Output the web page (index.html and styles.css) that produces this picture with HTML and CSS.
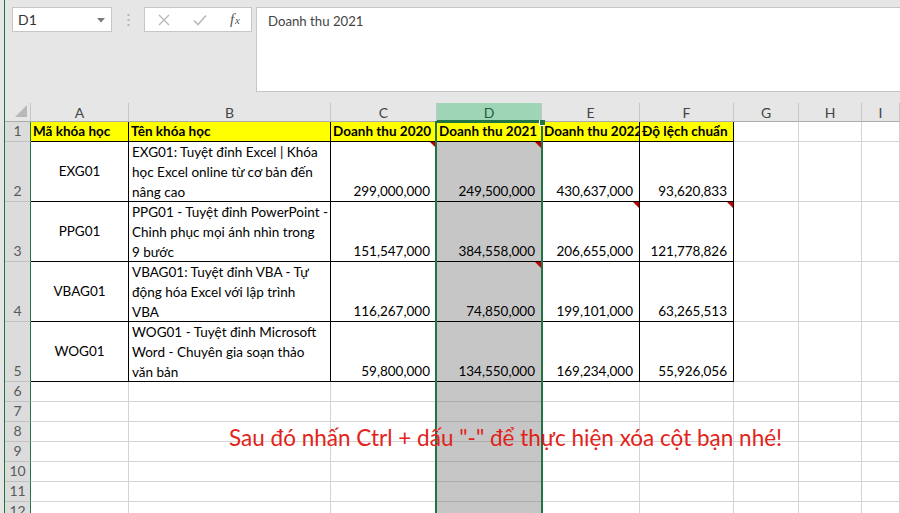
FILE: index.html
```html
<!DOCTYPE html>
<html lang="vi">
<head>
<meta charset="utf-8">
<title>Excel - xóa cột</title>
<link rel="stylesheet" href="styles.css">
</head>
<body>
<div class="window">
  <div class="edge"></div>
  <div class="main">
    <div class="fbar">
      <div class="namebox">
        <span class="nb-text">D1</span>
        <svg class="nb-arrow" width="8" height="5" viewBox="0 0 8 5"><path d="M0 0h8L4 4.5z" fill="#7a7a7a"/></svg>
      </div>
      <div class="grip">
        <svg width="3" height="12" viewBox="0 0 3 12"><rect x="0.5" y="0" width="2" height="2" fill="#b4b4b4"/><rect x="0.5" y="5" width="2" height="2" fill="#b4b4b4"/><rect x="0.5" y="10" width="2" height="2" fill="#b4b4b4"/></svg>
      </div>
      <div class="fbtns">
        <svg class="ico" width="12" height="12" viewBox="0 0 12 12"><path d="M1 1l10 10M11 1L1 11" stroke="#b9b9b9" stroke-width="1.4" fill="none"/></svg>
        <svg class="ico" width="14" height="12" viewBox="0 0 14 12"><path d="M1 6.5l4 4L13 1.5" stroke="#b9b9b9" stroke-width="1.6" fill="none"/></svg>
        <span class="fx">f<span class="fx-x">x</span></span>
      </div>
      <div class="finput">Doanh thu 2021</div>
    </div>

    <div class="sheet">
      <!-- column headers -->
      <div class="corner"><svg width="12" height="12" viewBox="0 0 12 12"><path d="M12 0V12H0z" fill="#b8b8b8"/></svg></div>
      <div class="ch">A</div>
      <div class="ch">B</div>
      <div class="ch">C</div>
      <div class="ch ch-sel">D</div>
      <div class="ch">E</div>
      <div class="ch">F</div>
      <div class="ch">G</div>
      <div class="ch">H</div>
      <div class="ch">I</div>

      <!-- row 1 -->
      <div class="rh">1</div>
      <div class="c t y b">Mã khóa học</div>
      <div class="c t y b">Tên khóa học</div>
      <div class="c t y b">Doanh thu 2020</div>
      <div class="c t y b">Doanh thu 2021</div>
      <div class="c t y b">Doanh thu 2022</div>
      <div class="c t y b">Độ lệch chuẩn</div>
      <div class="c"></div><div class="c"></div><div class="c"></div>

      <!-- row 2 -->
      <div class="rh">2</div>
      <div class="c t ctr">EXG01</div>
      <div class="c t wrap"><span>EXG01: Tuyệt đỉnh Excel | Khóa</span><span>học Excel online từ cơ bản đến</span><span>nâng cao</span></div>
      <div class="c t num cm">299,000,000</div>
      <div class="c t num sel cm">249,500,000</div>
      <div class="c t num">430,637,000</div>
      <div class="c t num">93,620,833</div>
      <div class="c"></div><div class="c"></div><div class="c"></div>

      <!-- row 3 -->
      <div class="rh">3</div>
      <div class="c t ctr">PPG01</div>
      <div class="c t wrap"><span>PPG01 - Tuyệt đỉnh PowerPoint -</span><span>Chinh phục mọi ánh nhìn trong</span><span>9 bước</span></div>
      <div class="c t num">151,547,000</div>
      <div class="c t num sel">384,558,000</div>
      <div class="c t num cm">206,655,000</div>
      <div class="c t num cm">121,778,826</div>
      <div class="c"></div><div class="c"></div><div class="c"></div>

      <!-- row 4 -->
      <div class="rh">4</div>
      <div class="c t ctr">VBAG01</div>
      <div class="c t wrap"><span>VBAG01: Tuyệt đỉnh VBA - Tự</span><span>động hóa Excel với lập trình</span><span>VBA</span></div>
      <div class="c t num">116,267,000</div>
      <div class="c t num sel cm">74,850,000</div>
      <div class="c t num">199,101,000</div>
      <div class="c t num">63,265,513</div>
      <div class="c"></div><div class="c"></div><div class="c"></div>

      <!-- row 5 -->
      <div class="rh">5</div>
      <div class="c t ctr">WOG01</div>
      <div class="c t wrap"><span>WOG01 - Tuyệt đỉnh Microsoft</span><span>Word - Chuyên gia soạn thảo</span><span>văn bản</span></div>
      <div class="c t num">59,800,000</div>
      <div class="c t num sel">134,550,000</div>
      <div class="c t num">169,234,000</div>
      <div class="c t num">55,926,056</div>
      <div class="c"></div><div class="c"></div><div class="c"></div>

      <!-- rows 6-12 -->
      <div class="rh">6</div><div class="c"></div><div class="c"></div><div class="c"></div><div class="c sel"></div><div class="c"></div><div class="c"></div><div class="c"></div><div class="c"></div><div class="c"></div>
      <div class="rh">7</div><div class="c"></div><div class="c"></div><div class="c"></div><div class="c sel"></div><div class="c"></div><div class="c"></div><div class="c"></div><div class="c"></div><div class="c"></div>
      <div class="rh">8</div><div class="c"></div><div class="c"></div><div class="c"></div><div class="c sel"></div><div class="c"></div><div class="c"></div><div class="c"></div><div class="c"></div><div class="c"></div>
      <div class="rh">9</div><div class="c"></div><div class="c"></div><div class="c"></div><div class="c sel"></div><div class="c"></div><div class="c"></div><div class="c"></div><div class="c"></div><div class="c"></div>
      <div class="rh">10</div><div class="c"></div><div class="c"></div><div class="c"></div><div class="c sel"></div><div class="c"></div><div class="c"></div><div class="c"></div><div class="c"></div><div class="c"></div>
      <div class="rh">11</div><div class="c"></div><div class="c"></div><div class="c"></div><div class="c sel"></div><div class="c"></div><div class="c"></div><div class="c"></div><div class="c"></div><div class="c"></div>
      <div class="rh">12</div><div class="c"></div><div class="c"></div><div class="c"></div><div class="c sel"></div><div class="c"></div><div class="c"></div><div class="c"></div><div class="c"></div><div class="c"></div>

      <!-- overlays -->
      <div class="sel-outline"><div class="fill-handle"></div></div>
      <div class="note">Sau đó nhấn Ctrl + dấu "-" để thực hiện xóa cột bạn nhé!</div>
    </div>
  </div>
</div>
</body>
</html>
```

FILE: styles.css
```css
* { box-sizing: border-box; }

html, body {
  margin: 0;
  padding: 0;
  width: 900px;
  height: 513px;
  overflow: hidden;
  background: #e6e6e6;
  font-family: Lato, "Open Sans", "Liberation Sans", sans-serif;
}

.window {
  display: flex;
  width: 900px;
  height: 513px;
  overflow: hidden;
}

.edge {
  flex: 0 0 5px;
  background: #e6e6e6;
  border-right: 1px solid #217346;
}

.main {
  flex: 1;
  display: flex;
  flex-direction: column;
  min-width: 0;
}

/* ---------- formula bar ---------- */
.fbar {
  height: 103px;
  flex: 0 0 103px;
  display: flex;
  align-items: flex-start;
  padding: 7px 0 0 7px;
  background: #e6e6e6;
}

.namebox {
  width: 100px;
  height: 25px;
  background: #fff;
  border: 1px solid #c6c6c6;
  display: flex;
  align-items: center;
  justify-content: space-between;
  padding: 0 6px 0 5px;
  color: #333;
  font-size: 14px;
}

.nb-arrow { margin-top: 1px; }

.grip {
  width: 32px;
  height: 25px;
  display: flex;
  align-items: center;
  justify-content: center;
}

.fbtns {
  width: 108px;
  height: 25px;
  background: #fff;
  border: 1px solid #c6c6c6;
  display: flex;
  align-items: center;
  justify-content: space-between;
  padding: 0 11px 0 13px;
}

.fx {
  font-family: "Liberation Serif", "DejaVu Serif", serif;
  font-style: italic;
  font-size: 15px;
  color: #555;
  line-height: 1;
}
.fx-x { font-size: 11px; margin-left: 1px; }

.finput {
  flex: 1;
  height: 85px;
  margin-left: 4px;
  margin-right: -3px;
  background: #fff;
  border: 1px solid #c6c6c6;
  padding: 4px 11px;
  color: #444;
  font-size: 13.2px;
  line-height: 18px;
}

/* ---------- sheet grid ---------- */
.sheet {
  position: relative;
  flex: 1;
  display: grid;
  grid-template-columns: 26px 98px 202px 106px 105px 98px 94px 65px 63px 1fr;
  grid-template-rows: 19px 20px 60px 60px 60px 60px repeat(7, 20px);
  background: #fff;
  font-size: 13.5px;
  color: #000;
}

.corner {
  background: #e6e6e6;
  border-right: 1px solid #c6c6c6;
  border-bottom: 1px solid #ababab;
  display: flex;
  align-items: flex-end;
  justify-content: flex-end;
  padding: 0 3px 4px 0;
}

.ch {
  background: #e6e6e6;
  border-right: 1px solid #c6c6c6;
  border-bottom: 1px solid #ababab;
  color: #444;
  font-size: 14px;
  display: flex;
  align-items: center;
  justify-content: center;
  padding-top: 1px;
}

.ch-sel {
  background: #9fd5b7;
  color: #1e5d3a;
  border-bottom: 2px solid #217346;
}

.rh {
  background: #dcdcdc;
  border-right: 1px solid #217346;
  border-bottom: 1px solid #c2c2c2;
  color: #5a5a5a;
  font-size: 14px;
  display: flex;
  align-items: flex-end;
  justify-content: center;
  padding-bottom: 1px;
  line-height: 18px;
}

.c {
  position: relative;
  border-right: 1px solid #d4d4d4;
  border-bottom: 1px solid #d4d4d4;
  padding: 0 3px;
  line-height: 19px;
  white-space: nowrap;
  overflow: hidden;
  display: flex;
  align-items: flex-end;
}

.c.t {
  border-right-color: #000;
  border-bottom-color: #000;
}

.y { background: #ffff00; }
.b { font-weight: 700; padding-left: 2px; }

.ctr {
  justify-content: center;
  align-items: center;
}

.wrap {
  flex-direction: column;
  align-items: flex-start;
  justify-content: flex-start;
  line-height: 20px;
}
.wrap span { display: block; }

.num {
  justify-content: flex-end;
  padding-right: 6px;
}

.sel { background: #c6c6c6; }
.c.sel:not(.t) { border-bottom-color: #adadad; border-right-color: #adadad; }

.cm::after {
  content: "";
  position: absolute;
  top: 0;
  right: 0;
  border-top: 6px solid #c00000;
  border-left: 6px solid transparent;
}

/* selection outline over column D */
.sel-outline {
  position: absolute;
  left: 430px;
  top: 18px;
  width: 108px;
  height: 420px;
  border: 2px solid #217346;
  pointer-events: none;
}

.fill-handle {
  position: absolute;
  right: -4px;
  top: -3px;
  width: 6px;
  height: 6px;
  background: #217346;
  border-left: 1px solid #fff;
  border-bottom: 1px solid #fff;
}

.note {
  position: absolute;
  left: 224px;
  top: 321px;
  font-size: 22.5px;
  color: #e2231a;
  white-space: nowrap;
  line-height: 28px;
}
```
